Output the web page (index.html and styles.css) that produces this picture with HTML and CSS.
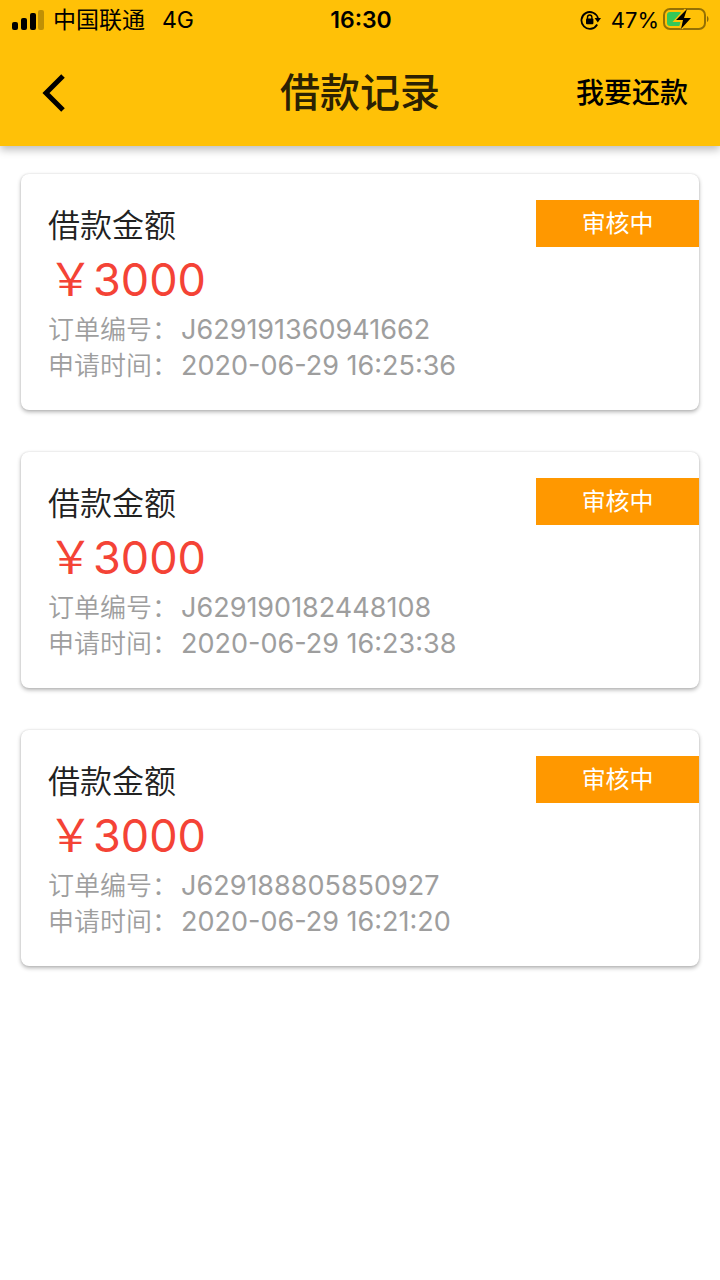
FILE: index.html
```html
<!DOCTYPE html>
<html lang="zh-CN">
<head>
<meta charset="utf-8">
<meta name="viewport" content="width=device-width, initial-scale=1">
<title>借款记录</title>
<link rel="stylesheet" href="styles.css">
</head>
<body>
<header class="header">
  <div class="status">
    <div class="status-left">
      <svg class="signal" width="32" height="20" viewBox="0 0 32 20" aria-hidden="true">
        <rect x="0" y="12" width="6" height="8" rx="2"/>
        <rect x="9" y="8" width="6" height="12" rx="2"/>
        <rect x="18" y="3" width="6" height="17" rx="2"/>
        <rect x="26" y="0" width="6" height="20" rx="2" opacity=".25"/>
      </svg>
      <span class="carrier">中国联通</span>
      <span>4G</span>
    </div>
    <div class="clock">16:30</div>
    <div class="status-right">
      <svg class="lock" width="22" height="20" viewBox="0 0 22 20" aria-hidden="true">
        <path d="M17.2 14.5A8.4 8.4 0 1 1 18 8.4" fill="none" stroke="#000" stroke-width="1.8"/>
        <path d="M14.6 8h6.4l-3.2 4.6z"/>
        <rect x="6" y="8.6" width="7.4" height="5.6" rx="1"/>
        <path d="M7.5 9V7.2a2.2 2.2 0 0 1 4.4 0V9" fill="none" stroke="#000" stroke-width="1.4"/>
      </svg>
      <span class="percent">47%</span>
      <svg class="battery" width="47" height="24" viewBox="0 0 47 24" aria-hidden="true">
        <rect x="1" y="1" width="41" height="20" rx="6" fill="none" stroke="#000" stroke-opacity=".42" stroke-width="2"/>
        <path d="M44 8v6c2-1 2-5 0-6z" opacity=".45"/>
        <rect x="4" y="4" width="15" height="14" rx="3" fill="#34c759"/>
        <path d="M23 2L14 12h6L18 20 27 10H21z" fill="#ffc107" stroke="#ffc107" stroke-width="4"/>
        <path d="M24 1L13 12h7L18 21 28 10H21z"/>
      </svg>
    </div>
  </div>
  <nav class="bar">
    <button class="back" type="button" aria-label="返回">
      <svg width="24" height="38" viewBox="0 0 24 38" aria-hidden="true"><path d="M21 2L4 19l17 17" fill="none" stroke="#000" stroke-width="5"/></svg>
    </button>
    <h1 class="title">借款记录</h1>
    <button class="repay" type="button">我要还款</button>
  </nav>
</header>
<main class="list">
  <article class="card">
    <div class="info">
      <h2 class="label">借款金额</h2>
      <p class="amount">￥3000</p>
      <p class="meta"><span class="key">订单编号：</span><span>J629191360941662</span></p>
      <p class="meta"><span class="key">申请时间：</span><span>2020-06-29 16:25:36</span></p>
    </div>
    <span class="tag">审核中</span>
  </article>
  <article class="card">
    <div class="info">
      <h2 class="label">借款金额</h2>
      <p class="amount">￥3000</p>
      <p class="meta"><span class="key">订单编号：</span><span>J629190182448108</span></p>
      <p class="meta"><span class="key">申请时间：</span><span>2020-06-29 16:23:38</span></p>
    </div>
    <span class="tag">审核中</span>
  </article>
  <article class="card">
    <div class="info">
      <h2 class="label">借款金额</h2>
      <p class="amount">￥3000</p>
      <p class="meta"><span class="key">订单编号：</span><span>J629188805850927</span></p>
      <p class="meta"><span class="key">申请时间：</span><span>2020-06-29 16:21:20</span></p>
    </div>
    <span class="tag">审核中</span>
  </article>
</main>
</body>
</html>
```
FILE: styles.css
```css
* { box-sizing: border-box; }
body {
  margin: 0;
  background: #fff;
  color: #212121;
  font-family: Inter, "Noto Sans CJK SC", sans-serif;
}
h1, h2, p { margin: 0; font-weight: 400; }
button {
  border: 0;
  padding: 0;
  background: none;
  color: #000;
  font-family: inherit;
}
svg { display: block; }
.header {
  background: #ffc107;
  color: #000;
  box-shadow: 0 4px 8px rgba(0, 0, 0, .25);
}
.status, .bar {
  display: grid;
  grid-template-columns: 1fr auto 1fr;
  align-items: center;
}
.status {
  height: 40px;
  padding: 0 10px 0 12px;
  font-size: 23px;
  line-height: 40px;
}
.status-left, .status-right { display: flex; align-items: center; }
.status-left { gap: 17px; }
.status-right { justify-content: flex-end; }
.signal { margin-right: -8px; }
.clock { font-weight: 600; }
.percent { margin: 0 4px 0 9px; font-size: 22px; }
.bar {
  height: 106px;
  padding: 0 32px;
}
.back { justify-self: start; margin-left: 10px; }
.title {
  color: #2b2103;
  font-size: 40px;
  font-weight: 500;
  line-height: 56px;
}
.repay {
  justify-self: end;
  font-size: 28px;
  font-weight: 500;
  line-height: 40px;
}
.list {
  display: flex;
  flex-direction: column;
  gap: 42px;
  padding: 28px 21px;
}
.card {
  display: flex;
  justify-content: space-between;
  align-items: flex-start;
  padding: 26px 0 26px 27px;
  border-radius: 8px;
  background: #fff;
  box-shadow: 0 2px 4px rgba(0, 0, 0, .3), 0 0 2px rgba(0, 0, 0, .12);
}
.label { font-size: 32px; font-weight: 350; line-height: 52px; }
.amount { margin-bottom: 4px; color: #f44336; font-size: 45px; line-height: 56px; }
.meta {
  display: flex;
  flex-wrap: wrap;
  column-gap: 3px;
  color: #9e9e9e;
  font-size: 27px;
  line-height: 36px;
}
.key { font-size: 26px; font-weight: 350; }
.tag {
  width: 25%;
  max-width: 240px;
  background: #ff9800;
  color: #fff;
  font-size: 24px;
  line-height: 47px;
  text-align: center;
}
```
